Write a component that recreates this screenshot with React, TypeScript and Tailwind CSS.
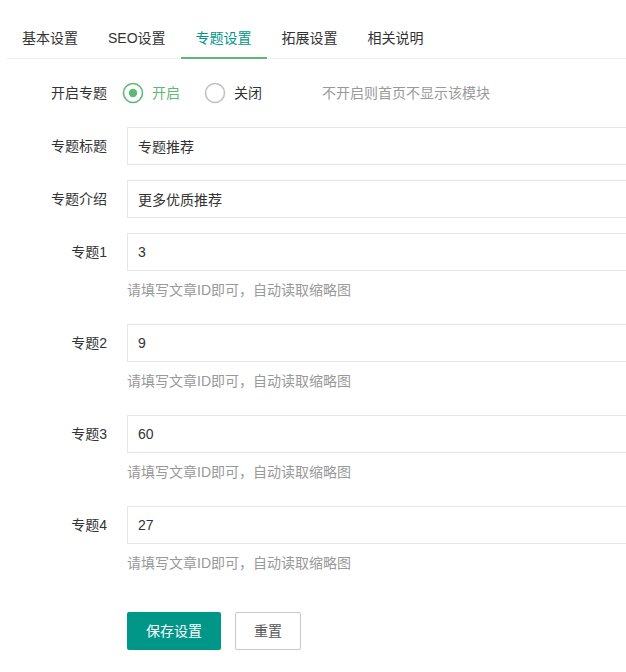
// 专题设置 tab of the theme options page (layui style)

import React from 'react';

const TABS = ['基本设置', 'SEO设置', '专题设置', '拓展设置', '相关说明'];
const ACTIVE_TAB = 2;

const TOPICS = [
  { label: '专题1', value: '3' },
  { label: '专题2', value: '9' },
  { label: '专题3', value: '60' },
  { label: '专题4', value: '27' },
];

const HINT = '请填写文章ID即可，自动读取缩略图';

function Radio({ checked }: { checked: boolean }) {
  return (
    <svg width="22" height="22" viewBox="0 0 22 22" className="shrink-0">
      <circle
        cx="11"
        cy="11"
        r="9.5"
        fill="none"
        stroke={checked ? '#5FB878' : '#c2c2c2'}
        strokeWidth="1.6"
      />
      {checked && <circle cx="11" cy="11" r="4.2" fill="#5FB878" />}
    </svg>
  );
}

function Label({ text }: { text: string }) {
  return (
    <label className="block w-[107px] shrink-0 text-right leading-[38px] text-[#333]">
      {text}
    </label>
  );
}

function TextInput({ value }: { value: string }) {
  return (
    <input
      defaultValue={value}
      className="ml-[20px] h-[38px] flex-1 border border-[#e6e6e6] bg-white pl-[10px] text-[14px] text-[#333] outline-none"
    />
  );
}

export default function App() {
  return (
    <div
      className="min-h-[672px] w-full overflow-hidden bg-white pt-[18px] text-[14px] text-[#333]"
      style={{ fontFamily: '"Liberation Sans", "Noto Sans CJK SC", sans-serif' }}
    >
      <div className="w-[700px]">
        <ul className="ml-[7px] flex h-[41px] border-b border-[#eeeeee]">
          {TABS.map((t, i) => (
            <li
              key={t}
              className={
                i === ACTIVE_TAB
                  ? 'relative px-[15px] leading-[40px] text-[#009688]'
                  : 'relative px-[15px] leading-[40px] text-[#333]'
              }
            >
              {t}
              {i === ACTIVE_TAB && (
                <span className="absolute bottom-[-1px] left-0 right-0 h-[2px] bg-[#5FB878]" />
              )}
            </li>
          ))}
        </ul>

        <form className="pt-[15px]">
          <div className="mb-[15px] flex items-center">
            <Label text="开启专题" />
            <div className="ml-[15px] flex h-[38px] items-center">
              <Radio checked />
              <span className="ml-[8px] text-[#5FB878]">开启</span>
              <span className="ml-[24px]">
                <Radio checked={false} />
              </span>
              <span className="ml-[8px] text-[#333]">关闭</span>
              <span className="ml-[60px] text-[#999]">不开启则首页不显示该模块</span>
            </div>
          </div>

          <div className="mb-[15px] flex">
            <Label text="专题标题" />
            <TextInput value="专题推荐" />
          </div>

          <div className="mb-[15px] flex">
            <Label text="专题介绍" />
            <TextInput value="更多优质推荐" />
          </div>

          {TOPICS.map((t) => (
            <div key={t.label} className="mb-[15px]">
              <div className="flex">
                <Label text={t.label} />
                <TextInput value={t.value} />
              </div>
              <div className="ml-[127px] py-[9px] leading-[20px] text-[#999]">{HINT}</div>
            </div>
          ))}

          <div className="ml-[127px] mt-[30px] flex">
            <button
              type="button"
              className="h-[38px] w-[94px] rounded-[2px] bg-[#009688] text-[14px] text-white"
            >
              保存设置
            </button>
            <button
              type="reset"
              className="ml-[14px] h-[38px] w-[66px] rounded-[2px] border border-[#C9C9C9] bg-white text-[14px] text-[#555]"
            >
              重置
            </button>
          </div>
        </form>
      </div>
    </div>
  );
}
